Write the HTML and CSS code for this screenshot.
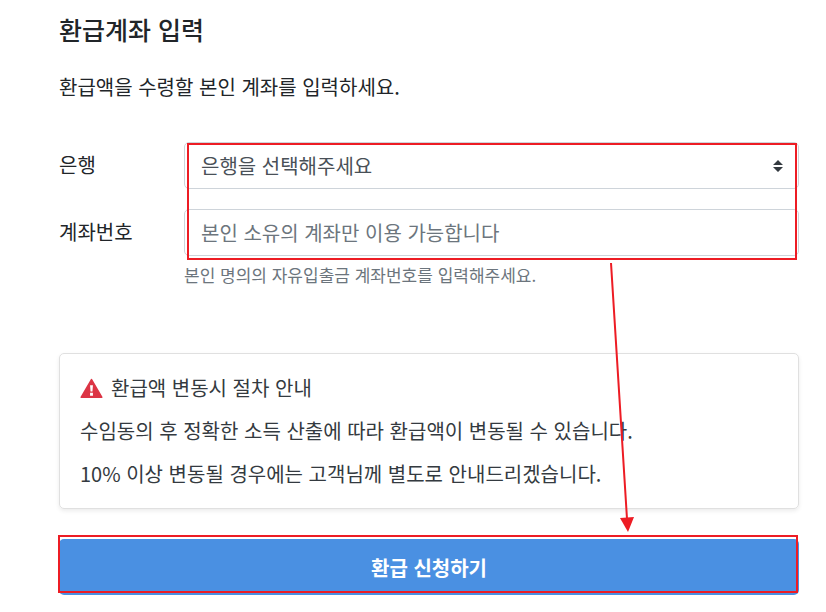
FILE: index.html
```html
<!DOCTYPE html>
<html lang="ko">
<head>
    <meta charset="UTF-8">
    <meta name="viewport" content="width=device-width, initial-scale=1.0">
    <title>환급계좌 입력</title>
    <link rel="stylesheet" href="styles.css">
</head>
<body>
    <main class="page">
        <h1>환급계좌 입력</h1>
        <p class="lead">환급액을 수령할 본인 계좌를 입력하세요.</p>

        <form class="refund-form">
            <div class="fields">
                <div class="row">
                    <label for="bank">은행</label>
                    <div class="control">
                        <select id="bank">
                            <option>은행을 선택해주세요</option>
                        </select>
                        <svg class="caret" viewBox="0 0 10 12" aria-hidden="true">
                            <path d="M0 5L5 0L10 5ZM0 7L5 12L10 7Z"/>
                        </svg>
                    </div>
                </div>
                <div class="row">
                    <label for="account">계좌번호</label>
                    <div class="control">
                        <input type="text" id="account" placeholder="본인 소유의 계좌만 이용 가능합니다">
                    </div>
                </div>
                <div class="mark mark-fields"></div>
            </div>
            <p class="help">본인 명의의 자유입출금 계좌번호를 입력해주세요.</p>

            <section class="notice">
                <h2>
                    <svg class="warning" viewBox="0 0 24 21" aria-hidden="true">
                        <path class="sign" d="M12 1.500L22.500 19.500H1.500Z"/>
                        <path class="bang" d="M10.500 7H13.500L13 13.500H11ZM10.500 15H13.500V18H10.500Z"/>
                    </svg>
                    환급액 변동시 절차 안내
                </h2>
                <p>수임동의 후 정확한 소득 산출에 따라 환급액이 변동될 수 있습니다.</p>
                <p>10% 이상 변동될 경우에는 고객님께 별도로 안내드리겠습니다.</p>
            </section>

            <div class="submit">
                <button type="button">환급 신청하기</button>
                <div class="mark mark-submit"></div>
            </div>

            <!-- arrow from the fields to the submit button -->
            <svg class="arrow" viewBox="0 0 30 270" aria-hidden="true">
                <path class="line" d="M5 0L21 256"/>
                <path class="head" d="M14 255L28 254L22 269Z"/>
            </svg>
        </form>
    </main>
</body>
</html>
```

FILE: styles.css
```css
* {
    box-sizing: border-box;
}
body {
    margin: 0;
    background-color: #fff;
    color: #212529;
    font-family: "Noto Sans CJK KR", "Noto Sans", sans-serif;
    font-size: 20px;
    line-height: 30px;
}
.page {
    padding: 10px 27px 17px 59px;
}
h1 {
    margin: 0 0 24px;
    font-size: 25px;
    font-weight: 500;
    line-height: 38px;
}
p {
    margin: 0;
}
.lead {
    margin-bottom: 40px;
}
.refund-form {
    position: relative;
}
.fields {
    position: relative;
    display: flex;
    flex-direction: column;
    gap: 20px;
}
.row {
    display: flex;
}
.row label {
    flex: 0 0 125px;
    padding-top: 8px;
}
.control {
    position: relative;
    flex: 1;
}
select,
input {
    display: block;
    width: 100%;
    height: 47px;
    padding: 0 16px;
    border: 1px solid #ced4da;
    border-radius: 5px;
    background-color: #fff;
    color: #495057;
    font-family: inherit;
    font-size: 20px;
    appearance: none;
}
input::placeholder {
    color: #6c757d;
    opacity: 1;
}
.caret {
    position: absolute;
    top: 18px;
    right: 16px;
    width: 10px;
    height: 12px;
    fill: #343a40;
}
.help {
    margin: 4px 0 63px 125px;
    color: #6c757d;
    font-size: 17px;
}
.notice {
    padding: 19px 20px;
    border: 1px solid #e0e0e0;
    border-radius: 5px;
    box-shadow: 0 2px 4px rgba(0, 0, 0, 0.08);
    color: #343a40;
    display: flex;
    flex-direction: column;
    gap: 13px;
}
.notice h2 {
    display: flex;
    align-items: center;
    gap: 8px;
    margin: 0;
    font-size: 20px;
    font-weight: 400;
}
.warning {
    width: 23px;
    height: 21px;
}
.warning .sign {
    fill: #dc3545;
    stroke: #dc3545;
    stroke-width: 2;
    stroke-linejoin: round;
}
.warning .bang {
    fill: #fff;
}
.submit {
    position: relative;
    margin-top: 30px;
}
button {
    display: block;
    width: 100%;
    height: 56px;
    border: none;
    border-radius: 5px;
    background-color: #4a90e2;
    color: #fff;
    font-family: inherit;
    font-size: 20px;
    font-weight: 700;
    cursor: pointer;
}
.mark {
    position: absolute;
    border: 2px solid #ed1c24;
    pointer-events: none;
}
.mark-fields {
    top: 1px;
    right: 2px;
    bottom: -4px;
    left: 128px;
}
.mark-submit {
    top: -4px;
    right: 1px;
    bottom: 2px;
    left: -1px;
}
.arrow {
    position: absolute;
    top: 121px;
    left: 547px;
    width: 30px;
    height: 270px;
    pointer-events: none;
}
.arrow .line {
    fill: none;
    stroke: #ed1c24;
    stroke-width: 2;
}
.arrow .head {
    fill: #ed1c24;
}
```
